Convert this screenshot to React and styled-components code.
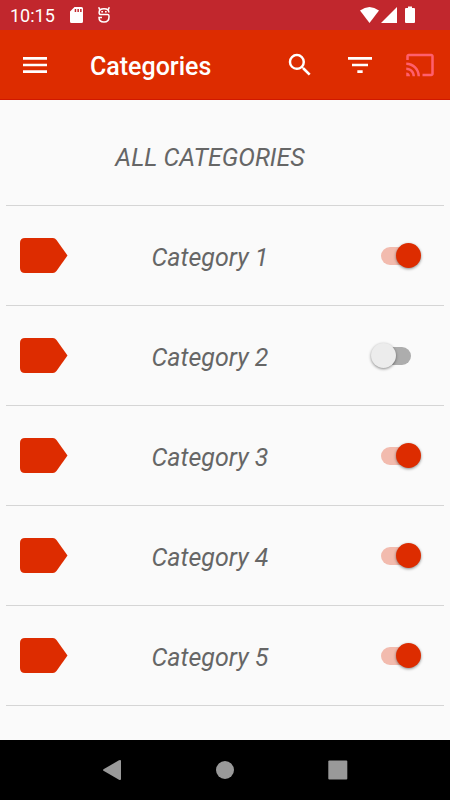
import React, { useState } from "react";
import styled, { createGlobalStyle } from "styled-components";

const GlobalStyle = createGlobalStyle`
  *, *::before, *::after { box-sizing: border-box; }
  body {
    margin: 0;
    background: #fafafa;
    font-family: Roboto, "Noto Sans", sans-serif;
  }
`;

const Screen = styled.div`
  display: flex;
  flex-direction: column;
  min-height: 100vh;
`;

const StatusBar = styled.div`
  display: flex;
  align-items: center;
  justify-content: space-between;
  height: 30px;
  padding: 0 34px 0 10px;
  background: #c1272d;
  color: #fff;
`;

const StatusGroup = styled.div`
  display: flex;
  align-items: center;
  gap: 14px;
`;

const Clock = styled.time`
  padding-top: 2px;
  font-size: 18px;
  line-height: 30px;
`;

const Icon = styled.svg`
  display: block;
  flex: none;
  fill: currentColor;
`;

const AppBar = styled.header`
  display: flex;
  align-items: center;
  height: 70px;
  background: #dd2c00;
  border-bottom: 1px solid #d01800;
  color: #fff;
`;

const BarButton = styled.button`
  display: grid;
  place-items: center;
  width: ${({ $wide }) => ($wide ? 70 : 60)}px;
  height: 69px;
  padding: 0;
  border: 0;
  background: none;
  color: ${({ $tint }) => $tint || "inherit"};
`;

const Title = styled.h1`
  flex: 1;
  margin: 0;
  padding: 4px 0 0 20px;
  font-size: 25px;
  line-height: 30px;
  font-weight: 500;
`;

const Content = styled.main`
  flex: 1;
  padding: 0 6px;
`;

const Heading = styled.h2`
  margin: 0;
  padding: 43px 30px 32px 0;
  border-bottom: 1px solid #d5d5d5;
  color: #666;
  font-size: 25px;
  line-height: 30px;
  font-style: italic;
  font-weight: 400;
  text-align: center;
`;

const List = styled.ul`
  margin: 0;
  padding: 0;
  list-style: none;
`;

const Row = styled.li`
  display: grid;
  grid-template-columns: 48px 1fr 50px;
  align-items: center;
  height: 100px;
  padding: 0 23px 0 14px;
  border-bottom: 1px solid #d5d5d5;
`;

const Label = styled.label`
  padding: 5px 19px 0 0;
  color: #666;
  font-size: 25px;
  line-height: 30px;
  font-style: italic;
  text-align: center;
`;

const Switch = styled.input.attrs({ type: "checkbox", role: "switch" })`
  appearance: none;
  display: grid;
  grid-template-columns: 1fr;
  align-items: center;
  width: 50px;
  height: 26px;
  margin: 0;

  &::before,
  &::after {
    content: "";
    grid-area: 1 / 1;
  }

  &::before {
    justify-self: center;
    width: 30px;
    height: 18px;
    border-radius: 9px;
    background: #adadad;
  }

  &::after {
    justify-self: start;
    width: 25px;
    height: 25px;
    border-radius: 50%;
    background: #ececec;
    box-shadow: 0 1px 3px rgba(0, 0, 0, 0.45);
  }

  &:checked::before {
    background: #f2bbae;
  }

  &:checked::after {
    justify-self: end;
    background: #dd2c00;
  }
`;

const NavBar = styled.nav`
  display: grid;
  grid-template-columns: repeat(3, 25%);
  justify-content: center;
  height: 60px;
  background: #000;
`;

const NavButton = styled.button`
  display: grid;
  place-items: center;
  padding: 0;
  border: 0;
  background: none;
  color: #999;
`;

const initialCategories = [
  { name: "Category 1", on: true },
  { name: "Category 2", on: false },
  { name: "Category 3", on: true },
  { name: "Category 4", on: true },
  { name: "Category 5", on: true },
];

function TagIcon() {
  return (
    <Icon width="48" height="35" viewBox="0 0 48 35" aria-hidden="true">
      <path d="M5 0H33Q35 0 36.500 2L47.500 17.500L36.500 33Q35 35 33 35H5Q0 35 0 30V5Q0 0 5 0Z" fill="#dd2c00" />
    </Icon>
  );
}

export default function App() {
  const [categories, setCategories] = useState(initialCategories);
  const toggle = (name) =>
    setCategories((items) =>
      items.map((item) => (item.name === name ? { ...item, on: !item.on } : item))
    );

  return (
    <>
      <GlobalStyle />
      <Screen>
        <StatusBar>
          <StatusGroup>
            <Clock>10:15</Clock>
            <Icon width="15" height="16" viewBox="0 0 15 16" aria-hidden="true">
              <path fillRule="evenodd" d="M5.500 0H12.500Q14 0 14 1.500V14.500Q14 16 12.500 16H2.500Q1 16 1 14.500V4.500ZM5.700 2V5H7.200V2ZM8.400 2V5H9.900V2ZM11.100 2V5H12.600V2Z" />
            </Icon>
            <Icon width="12" height="16" viewBox="0 0 12 16" aria-hidden="true">
              <path
                d="M.7 .2L1.600 2.500M11.300 .2L10.400 2.500M10.900 5.500Q10.900 1.800 6 1.800T1.100 5.500Q1.100 7.600 3 7.600H9.500Q11 7.600 11 9V10Q11 15 6 15T1 10.500H4"
                fill="none"
                stroke="currentColor"
                strokeWidth="1.500"
              />
              <path d="M3.300 4H5V5.600H3.300ZM7 4H8.700V5.600H7Z" />
            </Icon>
          </StatusGroup>
          <Icon width="56" height="18" viewBox="0 0 56 18" aria-hidden="true">
            <path d="M0 4.500Q9.500 -2.500 19 4.500L9.500 17Z" />
            <path d="M37 1V17H21Z" />
            <path d="M48 .5H52V2H54Q55 2 55 3V16Q55 17 54 17H46Q45 17 45 16V3Q45 2 46 2H48Z" />
          </Icon>
        </StatusBar>

        <AppBar>
          <BarButton $wide aria-label="Open menu">
            <Icon width="32" height="32" viewBox="0 0 24 24">
              <path d="M3 18h18v-2H3v2zm0-5h18v-2H3v2zm0-7v2h18V6H3z" />
            </Icon>
          </BarButton>
          <Title>Categories</Title>
          <BarButton aria-label="Search">
            <Icon width="30" height="30" viewBox="0 0 24 24">
              <path d="M15.500 14h-.79l-.28-.27A6.470 6.470 0 0 0 16 9.500 6.500 6.500 0 1 0 9.500 16c1.610 0 3.090-.59 4.230-1.570l.27.28v.79l5 4.990L20.490 19l-4.990-5zm-6 0C7.010 14 5 11.990 5 9.500S7.010 5 9.500 5 14 7.010 14 9.500 11.990 14 9.500 14z" />
            </Icon>
          </BarButton>
          <BarButton aria-label="Filter">
            <Icon width="32" height="32" viewBox="0 0 24 24">
              <path d="M10 18h4v-2h-4v2zM3 6v2h18V6H3zm3 7h12v-2H6v2z" />
            </Icon>
          </BarButton>
          <BarButton $tint="#ff5f6d" aria-label="Cast">
            <Icon width="30" height="30" viewBox="0 0 24 24">
              <path d="M21 3H3c-1.100 0-2 .9-2 2v3h2V5h18v14h-7v2h7c1.100 0 2-.9 2-2V5c0-1.100-.9-2-2-2zM1 18v3h3c0-1.660-1.340-3-3-3zm0-4v2c2.760 0 5 2.240 5 5h2c0-3.870-3.130-7-7-7zm0-4v2c4.970 0 9 4.030 9 9h2c0-6.080-4.930-11-11-11z" />
            </Icon>
          </BarButton>
        </AppBar>

        <Content>
          <Heading>ALL CATEGORIES</Heading>
          <List>
            {categories.map(({ name, on }, index) => (
              <Row key={name}>
                <TagIcon />
                <Label htmlFor={`category-${index}`}>{name}</Label>
                <Switch
                  id={`category-${index}`}
                  checked={on}
                  onChange={() => toggle(name)}
                />
              </Row>
            ))}
          </List>
        </Content>

        <NavBar aria-label="System navigation">
          <NavButton aria-label="Back">
            <Icon width="20" height="20" viewBox="0 0 20 20">
              <path d="M.5 9.200L16 .3Q18 -.5 18 1V19Q18 20.500 16 19.700L.5 10.800Q-.5 10 .5 9.200Z" />
            </Icon>
          </NavButton>
          <NavButton aria-label="Home">
            <Icon width="20" height="20" viewBox="0 0 20 20">
              <circle cx="10" cy="10" r="9" />
            </Icon>
          </NavButton>
          <NavButton aria-label="Recent apps">
            <Icon width="20" height="20" viewBox="0 0 20 20">
              <rect x=".3" y=".5" width="19" height="19" rx="1" />
            </Icon>
          </NavButton>
        </NavBar>
      </Screen>
    </>
  );
}
